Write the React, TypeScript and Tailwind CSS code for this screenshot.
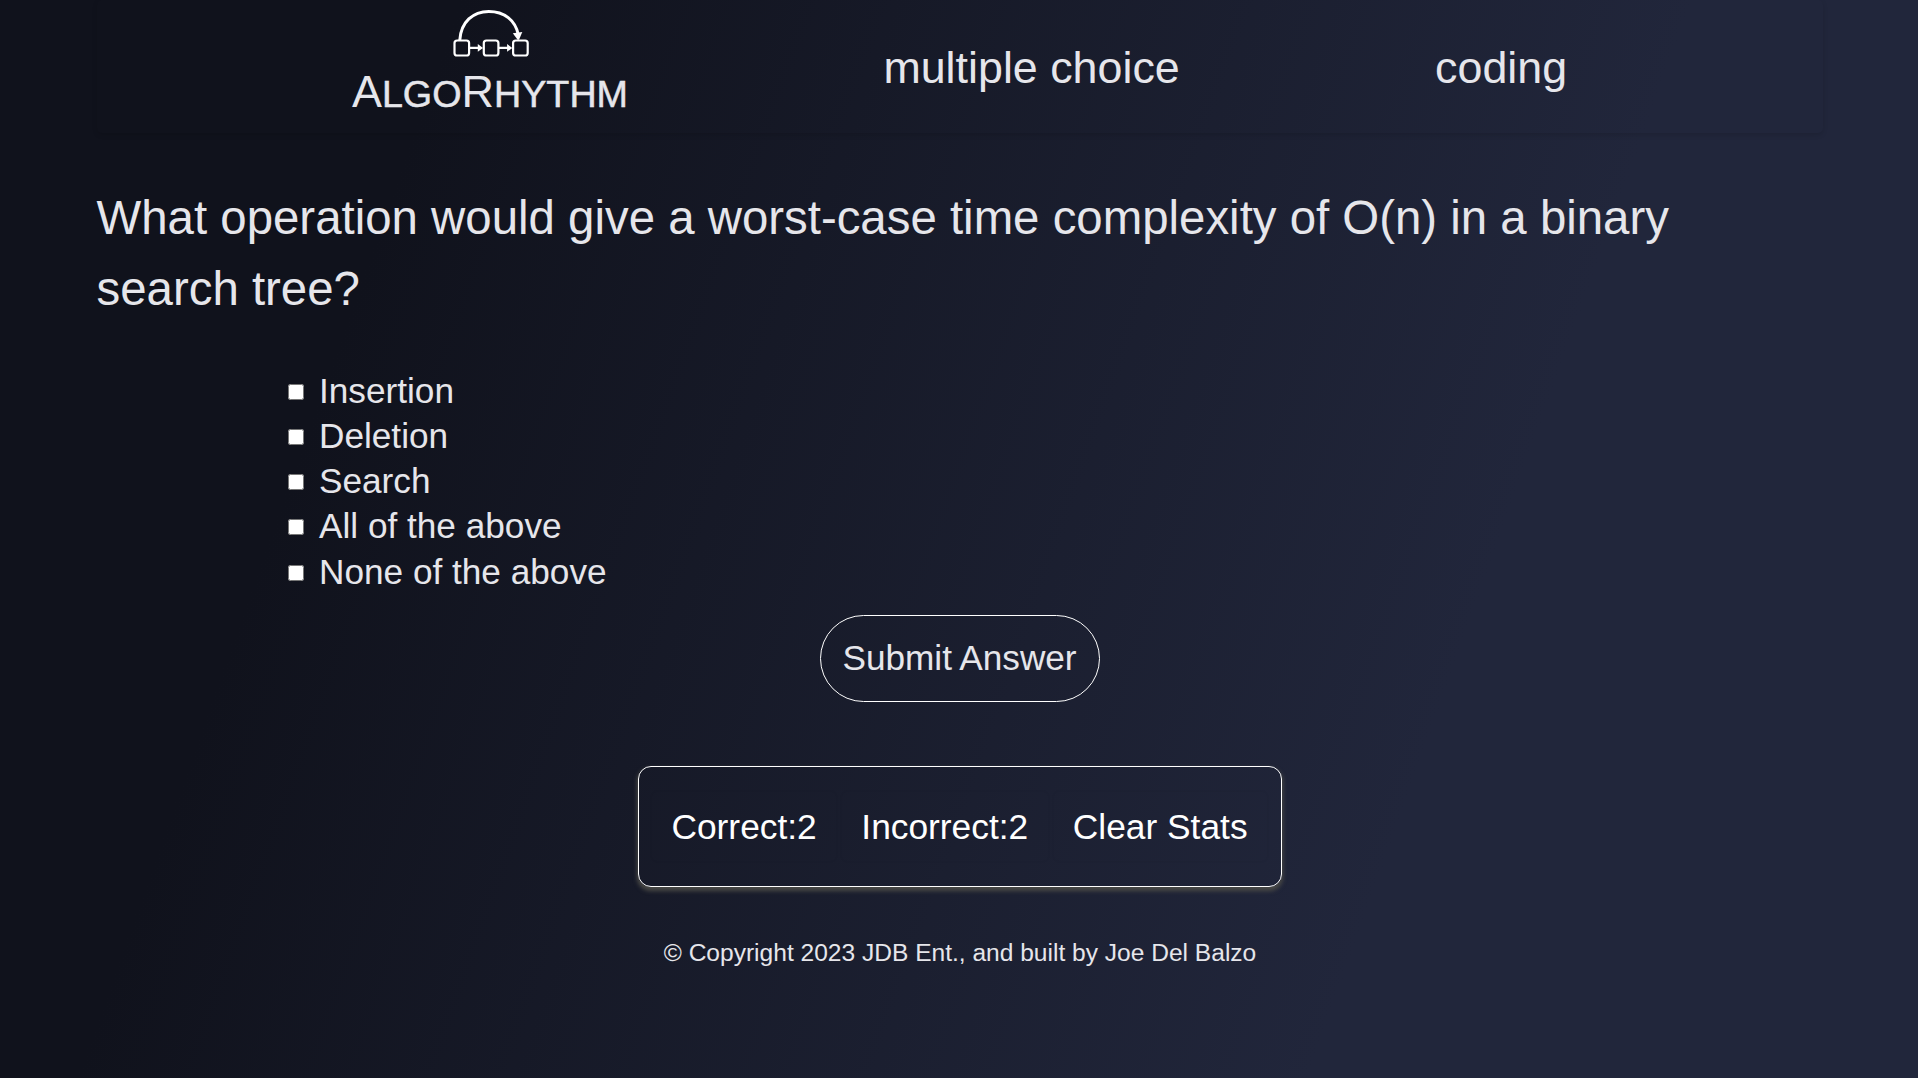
import React from 'react';

const answers = ['Insertion', 'Deletion', 'Search', 'All of the above', 'None of the above'];
const stats = ['Correct:2', 'Incorrect:2', 'Clear Stats'];

function Logo() {
  return (
    <a className="flex h-[133px] flex-col items-center" href="#">
      <svg className="mt-[8px] ml-[2px] h-[50px] w-[78px]" viewBox="452 8 78 50" fill="none" stroke="#fff">
        <path d="M459.8 40C461 22 473 11.4 488.8 11.4C504 11.4 515.5 20 518.4 35" strokeWidth="3" />
        <path d="M512.8 33.2L522.3 32L519 39.8H517.6Z" fill="#fff" stroke="none" />
        <g strokeWidth="2.2">
          <rect x="454.5" y="40.5" width="14.6" height="15" rx="2.6" />
          <rect x="483.8" y="40.5" width="14.6" height="15" rx="2.6" />
          <rect x="513.1" y="40.5" width="14.6" height="15" rx="2.6" />
          <path d="M469.5 47.9H479M499 47.9H508" />
        </g>
        <path d="M477.8 44L483 47.9L477.8 51.8ZM507.1 44L512.3 47.9L507.1 51.8Z" fill="#fff" stroke="none" />
      </svg>
      <span className="mt-[9px] text-[45px] leading-[50px]">
        A<span className="text-[37.7px] [-webkit-text-stroke:0.5px_#e6e6eb]">LGO</span>R
        <span className="text-[37.7px] [-webkit-text-stroke:0.5px_#e6e6eb]">HYTHM</span>
      </span>
    </a>
  );
}

export default function App() {
  return (
    <div className="flex h-[1078px] flex-col items-center overflow-hidden bg-[linear-gradient(109.6deg,#10121c_20%,#21263b_73.5%)] pl-px font-['Liberation_Sans',Arial,sans-serif] text-[#e6e6eb]">
      <header className="flex h-[133px] w-[1726px] shrink-0 justify-evenly rounded-[5px] shadow-[0_2px_5px_rgba(0,0,0,0.13)]">
        <Logo />
        <a className="mt-[42px] text-[44.8px] leading-[50px]" href="#">multiple choice</a>
        <a className="mt-[42px] text-[44.8px] leading-[50px]" href="#">coding</a>
      </header>
      <main className="flex w-[1726px] flex-col items-center">
        <h1 className="mt-[49px] w-full text-[47.4px] leading-[71px]">
          What operation would give a worst-case time complexity of O(n) in a binary search tree?
        </h1>
        <div className="mt-[43px] w-full pl-[191px]">
          {answers.map((a) => (
            <label key={a} className="flex h-[45.25px] items-center text-[35.2px] leading-[45.25px]">
              <input type="checkbox" className="mt-[4px] mr-[15.5px] size-[16px]" />
              <span className="mt-px">{a}</span>
            </label>
          ))}
        </div>
        <button className="mt-[22px] h-[87px] w-[280px] rounded-full border border-white pb-px text-[35.2px] [word-spacing:-0.5px]">
          Submit Answer
        </button>
        <section className="mt-[64px] flex h-[121px] w-[644px] items-center justify-center gap-[6px] rounded-[13px] border border-white text-[35.35px] text-white shadow-[0_3px_4px_1px_#4a4a46]">
          {stats.map((s) => (
            <div key={s} className="flex h-[69px] items-center rounded-[5px] px-[19.3px] shadow-[0_0_3px_rgba(0,0,0,0.06)]">
              {s}
            </div>
          ))}
        </section>
      </main>
      <footer className="mt-[51px] pl-px text-[24.55px] leading-[30px]">
        © Copyright 2023 JDB Ent., and built by Joe Del Balzo
      </footer>
    </div>
  );
}
